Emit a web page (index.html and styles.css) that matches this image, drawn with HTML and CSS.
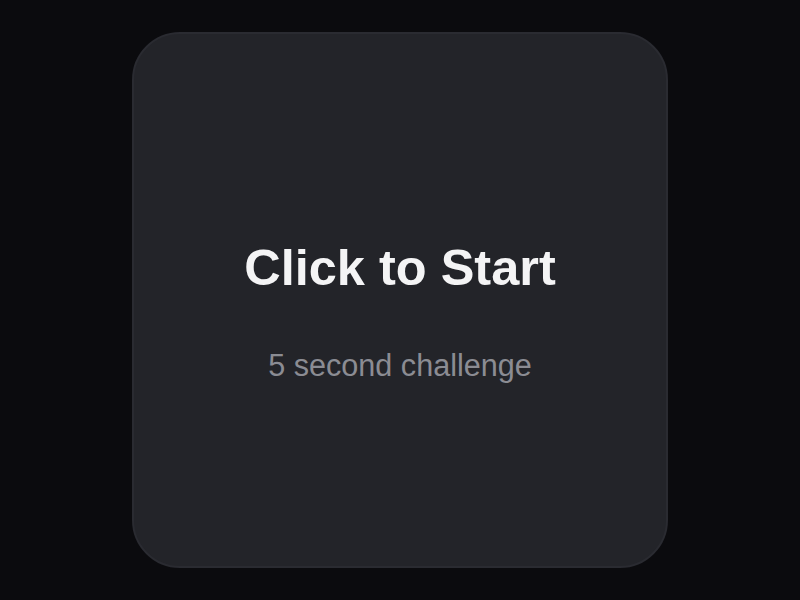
FILE: index.html
```html
<!DOCTYPE html>
<html lang="en">
<head>
<meta charset="utf-8">
<title>Click to Start</title>
<link rel="stylesheet" href="styles.css">
</head>
<body>
<main class="stage">
  <div class="card">
    <h1 class="title">Click to Start</h1>
    <p class="subtitle">5 second challenge</p>
  </div>
</main>
</body>
</html>
```

FILE: styles.css
```css
html, body {
  margin: 0;
  padding: 0;
  height: 100%;
}
body {
  background: #0b0b0e;
  font-family: "Liberation Sans", Arial, sans-serif;
}
.stage {
  height: 100%;
  display: flex;
  align-items: center;
  justify-content: center;
}
.card {
  box-sizing: border-box;
  width: 536px;
  height: 536px;
  background: #232429;
  border: 2px solid #2a2b31;
  border-radius: 48px;
  display: flex;
  flex-direction: column;
  align-items: center;
  justify-content: center;
  padding-top: 21px;
}
.title {
  margin: 0 0 52px;
  font-size: 50.5px;
  line-height: 57.5px;
  font-weight: 700;
  color: #f4f4f5;
}
.subtitle {
  margin: 0;
  font-size: 30.6px;
  line-height: 34.5px;
  color: #8b8c93;
}
```
